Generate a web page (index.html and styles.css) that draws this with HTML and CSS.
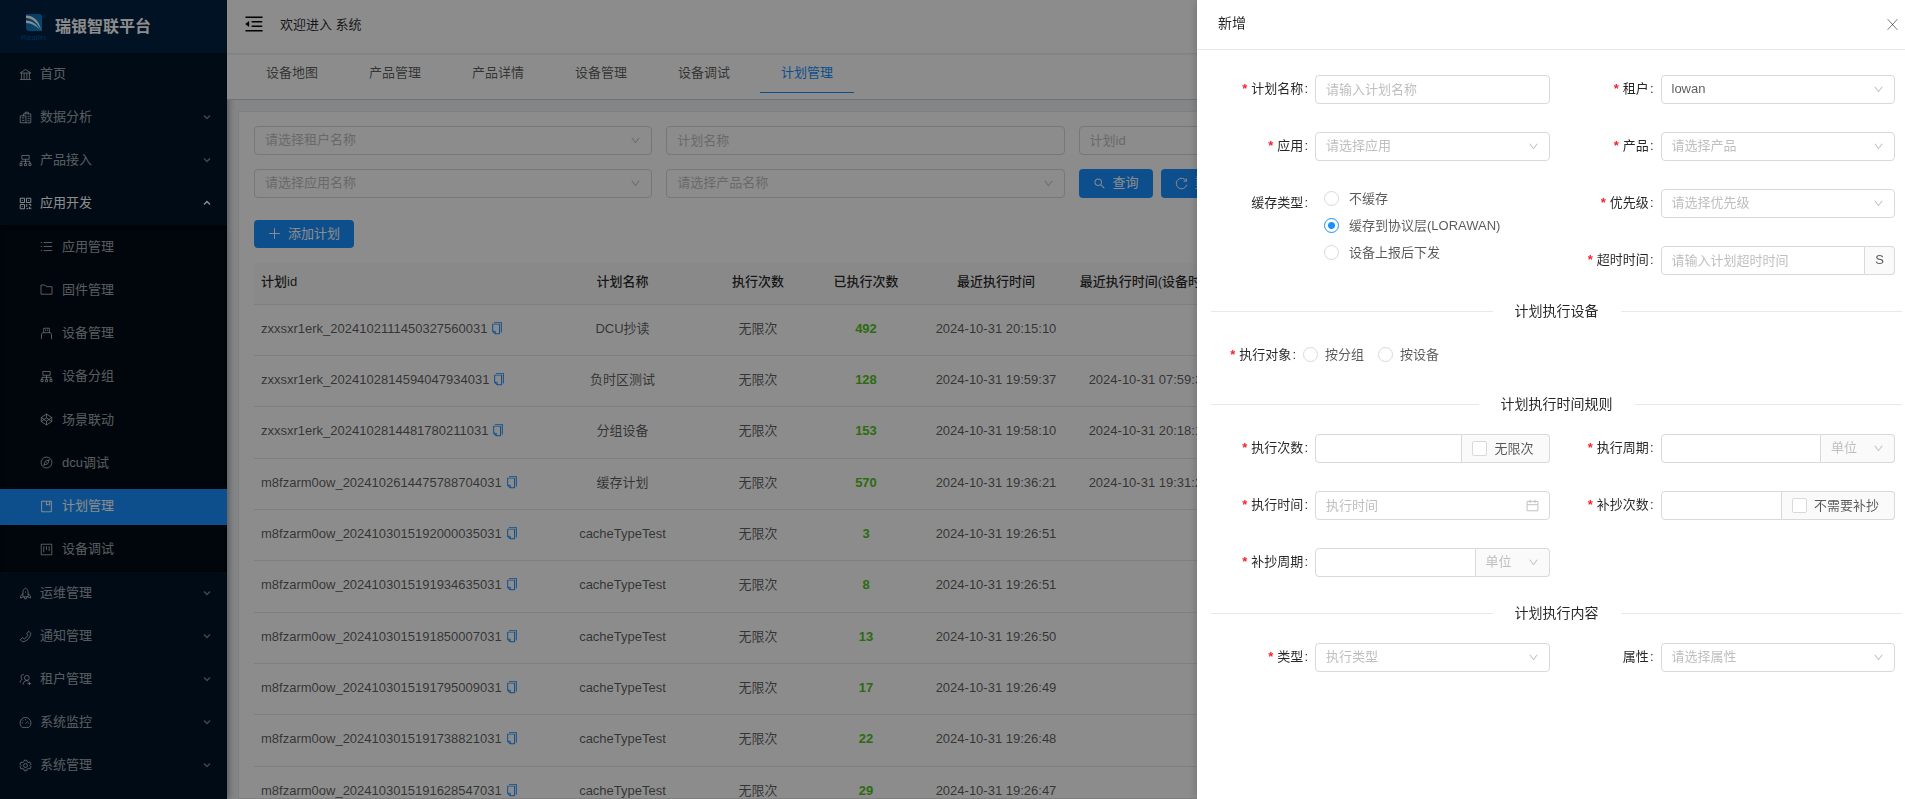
FILE: index.html
```html
<!DOCTYPE html>
<html lang="zh-CN">
<head>
<meta charset="utf-8">
<title>瑞银智联平台</title>
<link rel="stylesheet" href="styles.css">
</head>
<body>
<svg class="sprite" aria-hidden="true">
  <symbol id="i-bank" viewBox="0 0 16 16"><path d="M1.5 6.2 8 1.8l6.500 4.400zM3.200 6.500v7M6.300 6.500v7M9.700 6.500v7M12.800 6.500v7M1 14.200h14"/></symbol>
  <symbol id="i-data" viewBox="0 0 16 16"><path d="M5.500 6V3.500h2V1.500h4v2h3v11h-13V6h7v8.500M3.500 8.500h3M3.500 11.500h3M7.500 3.500h4M10.500 6.500H13M10.500 9.300H13M10.500 12H13"/></symbol>
  <symbol id="i-cluster" viewBox="0 0 16 16"><path d="M3.500 1.800h9v4.700h-9zM8 6.500v4.500M2.500 11.500V9h11v2.500M1.200 11.700h2.600v2.600H1.200zM6.700 11.700h2.600v2.600H6.700zM12.200 11.700h2.600v2.600h-2.600z"/></symbol>
  <symbol id="i-qr" viewBox="0 0 16 16"><path d="M1.500 1.500h5.300v5.300H1.500zM9.200 1.500h5.300v5.300H9.200zM1.500 9.200h5.300v5.300H1.500zM4 3.600v1M11.800 3.600v1M4 11.300v1M9.500 8.700v3.500M12 9.200h2.500v2M9.200 14.300h2.300M12 12.500h1v2.300M14.500 13v2"/></symbol>
  <symbol id="i-list" viewBox="0 0 16 16"><path d="M4.500 3h10.500M4.500 8h10.500M4.500 13h10.500M1 3h1.600M1 8h1.600M1 13h1.600"/></symbol>
  <symbol id="i-folder" viewBox="0 0 16 16"><path d="M1.200 2.500h5l1.800 2h6.800v9.300H1.200z"/></symbol>
  <symbol id="i-usb" viewBox="0 0 16 16"><path d="M4.500 7V1.500h7V7M1.800 15V9.500c0-1.500 1-2.500 2.500-2.500h7.400c1.500 0 2.500 1 2.500 2.500V15M6.800 3.200v1.600M9.200 3.200v1.600"/></symbol>
  <symbol id="i-hex" viewBox="0 0 16 16"><path d="M8 1.300 14.500 5.500v5L8 14.700 1.500 10.500v-5zM8 1.300V6M8 10v4.700M1.500 5.500 8 10l6.500-4.500M1.500 10.500 8 6l6.500 4.500"/></symbol>
  <symbol id="i-compass" viewBox="0 0 16 16"><circle cx="8" cy="8" r="6.700"/><path d="M11.300 4.700 9.500 9.500l-4.800 1.800 1.800-4.800zM8 8l.5.5"/></symbol>
  <symbol id="i-book" viewBox="0 0 16 16"><path d="M2 1.500h12v13H2zM8 1.500v5l2-1.500 2 1.500v-5"/></symbol>
  <symbol id="i-project" viewBox="0 0 16 16"><path d="M1.500 1.500h13v13h-13zM4.700 4v7.500M8 4v4.500M11.300 4v6"/></symbol>
  <symbol id="i-rocket" viewBox="0 0 16 16"><path d="M4.800 12V6C5 4 6.300 2.300 8 1.200 9.700 2.300 11 4 11.200 6v6zM4.800 8 1.800 11.500v2l3-1M11.200 8l3 3.500v2l-3-1M6.500 12.500l.5 2h2l.5-2M8 5.500v1.500"/></symbol>
  <symbol id="i-phone" viewBox="0 0 16 16"><path d="M12 1.500 14.500 4c-.4 5.700-4.800 10.100-10.500 10.500L1.500 12l3-2.500 2 1.500C8.500 10 10 8.500 11 6.500L9.500 4.500z"/></symbol>
  <symbol id="i-users" viewBox="0 0 16 16"><circle cx="9.700" cy="6" r="3"/><path d="M5 14.500c0-3 1.500-5 4.700-5 1 0 1.600.2 2.300.6M6 2C3.500 1.500 2.500 3 2.500 4.500S3 7 4 7.700C2.200 8.500 1.500 10 1.300 12M10.500 13h4.500M12.700 11v4"/></symbol>
  <symbol id="i-dash" viewBox="0 0 16 16"><path d="M4 14h8c1.600-1.300 2.700-3.200 2.700-5.500A6.700 6.700 0 0 0 1.300 8.500C1.300 10.800 2.400 12.700 4 14zM8 9.500l3-3M3.500 8.500H5M11.500 9h1M8 4v1.300M4.700 5.200l.8.800"/></symbol>
  <symbol id="i-gear" viewBox="0 0 16 16"><circle cx="8" cy="8" r="2.400"/><path d="M6.500 1.500h3l.5 2 1.500.9 2-.6 1.400 2.600-1.400 1.400v.4l1.400 1.400-1.400 2.600-2-.6-1.500.9-.5 2h-3l-.5-2-1.500-.9-2 .6-1.400-2.600 1.400-1.400v-.4L1.100 6.400l1.400-2.600 2 .6L6 3.500z"/></symbol>
  <symbol id="i-caret" viewBox="0 0 16 16"><path d="M2 5 8 11 14 5"/></symbol>
  <symbol id="i-plus" viewBox="0 0 16 16"><path d="M8 1.500v13M1.500 8h13"/></symbol>
  <symbol id="i-close" viewBox="0 0 16 16"><path d="M2 1.500 14 14.500M14 1.500 2 14.500"/></symbol>
  <symbol id="i-reload" viewBox="0 0 16 16"><path d="M13.800 5A6.500 6.500 0 1 0 14.400 9.500M14 1.800V5.200h-3.400"/></symbol>
  <symbol id="i-calendar" viewBox="0 0 16 16"><path d="M1.300 3h13.400v11.500H1.300zM1.300 7h13.400M5 1v4M11 1v4"/></symbol>
  <symbol id="i-down" viewBox="0 0 1024 1024"><path d="M884 256h-75c-5.100 0-9.900 2.500-12.900 6.600L512 654.200 227.900 262.600c-3-4.100-7.800-6.600-12.900-6.600h-75c-6.500 0-10.300 7.400-6.500 12.700l352.600 486.100c12.800 17.600 39 17.600 51.700 0l352.600-486.100c3.900-5.300.1-12.700-6.400-12.700z"/></symbol>
  <symbol id="i-search" viewBox="0 0 1024 1024"><path d="M909.600 854.500L649.900 594.800C690.200 542.700 712 479 712 412c0-80.200-31.300-155.400-87.900-212.100-56.600-56.700-132-87.900-212.100-87.900s-155.500 31.300-212.100 87.900C143.200 256.500 112 331.800 112 412c0 80.100 31.300 155.500 87.900 212.100C256.500 680.800 331.800 712 412 712c67 0 130.600-21.800 182.700-62l259.700 259.600a8.200 8.200 0 0 0 11.600 0l43.600-43.500a8.200 8.200 0 0 0 0-11.600zM570.400 570.400C528 612.700 471.800 636 412 636s-116-23.300-158.400-65.600C211.300 528 188 471.800 188 412s23.300-116.100 65.600-158.400C296 211.300 352.200 188 412 188s116.100 23.200 158.400 65.600S636 352.200 636 412s-23.300 116.100-65.600 158.400z"/></symbol>
  <symbol id="i-fold" viewBox="0 0 1024 1024"><path d="M408 442h480c4.400 0 8-3.600 8-8v-56c0-4.400-3.600-8-8-8H408c-4.400 0-8 3.600-8 8v56c0 4.400 3.600 8 8 8zm-8 204c0 4.400 3.600 8 8 8h480c4.400 0 8-3.600 8-8v-56c0-4.400-3.600-8-8-8H408c-4.400 0-8 3.600-8 8v56zm504-486H120c-4.400 0-8 3.600-8 8v56c0 4.400 3.600 8 8 8h784c4.400 0 8-3.600 8-8v-56c0-4.400-3.600-8-8-8zm0 632H120c-4.400 0-8 3.600-8 8v56c0 4.400 3.600 8 8 8h784c4.400 0 8-3.600 8-8v-56c0-4.400-3.600-8-8-8zM115.400 518.900L271.700 642c5.800 4.600 14.400.5 14.400-6.900V388.900c0-7.400-8.500-11.500-14.400-6.900L115.400 505.100a8.740 8.740 0 0 0 0 13.800z"/></symbol>
  <symbol id="i-copy" viewBox="0 0 1024 1024"><path d="M832 64H296c-4.400 0-8 3.600-8 8v56c0 4.400 3.600 8 8 8h496v688c0 4.400 3.600 8 8 8h56c4.400 0 8-3.600 8-8V96c0-17.700-14.300-32-32-32zM704 192H192c-17.700 0-32 14.300-32 32v530.700c0 8.500 3.400 16.600 9.400 22.600l173.300 173.300c2.200 2.200 4.700 4 7.400 5.500v1.900h4.200c3.500 1.300 7.200 2 11 2H704c17.700 0 32-14.300 32-32V224c0-17.700-14.300-32-32-32zM350 856.200L263.900 770H350v86.200zM664 888H414V746c0-22.100-17.900-40-40-40H232V264h432v624z"/></symbol>
</svg>

<div class="app">
  <aside class="sidebar">
    <a class="brand" href="#">
      <svg class="brand-logo" viewBox="0 0 26 30" aria-hidden="true">
        <defs><linearGradient id="logo-fill" x1="0" y1="0" x2="1" y2="1"><stop offset="0" stop-color="#0868ae"/><stop offset="1" stop-color="#0a8ad2"/></linearGradient></defs>
        <path d="M5 2h13q3 0 3 3v14H8q-3 0-3-3z" fill="url(#logo-fill)"/>
        <path d="M5 3.500C12 3.500 18 8 20 18 16 10.500 12 6.500 5 6z" fill="#fff"/>
        <path d="M5 8.500c6 .3 10.500 3.500 13.500 9C14.500 13.500 10.500 11.300 5 11z" fill="#fff"/>
        <text class="brand-mark" x="0" y="28">Reallin</text>
        <circle cx="23.500" cy="4" r="1.300" fill="none" stroke="#08508c" stroke-width=".6"/>
      </svg>
      <span class="brand-name">瑞银智联平台</span>
    </a>
    <nav>
      <ul class="menu">
        <li><a class="menu-item" href="#"><svg class="icon"><use href="#i-bank"/></svg>首页</a></li>
        <li><a class="menu-item" href="#"><svg class="icon"><use href="#i-data"/></svg>数据分析<svg class="icon caret"><use href="#i-caret"/></svg></a></li>
        <li><a class="menu-item" href="#"><svg class="icon"><use href="#i-cluster"/></svg>产品接入<svg class="icon caret"><use href="#i-caret"/></svg></a></li>
        <li>
          <a class="menu-item is-open" href="#"><svg class="icon"><use href="#i-qr"/></svg>应用开发<svg class="icon caret"><use href="#i-caret"/></svg></a>
          <ul class="submenu">
            <li><a class="sub-item" href="#"><svg class="icon"><use href="#i-list"/></svg>应用管理</a></li>
            <li><a class="sub-item" href="#"><svg class="icon"><use href="#i-folder"/></svg>固件管理</a></li>
            <li><a class="sub-item" href="#"><svg class="icon"><use href="#i-usb"/></svg>设备管理</a></li>
            <li><a class="sub-item" href="#"><svg class="icon"><use href="#i-cluster"/></svg>设备分组</a></li>
            <li><a class="sub-item" href="#"><svg class="icon"><use href="#i-hex"/></svg>场景联动</a></li>
            <li><a class="sub-item" href="#"><svg class="icon"><use href="#i-compass"/></svg>dcu调试</a></li>
            <li><a class="sub-item is-active" href="#"><svg class="icon"><use href="#i-book"/></svg>计划管理</a></li>
            <li><a class="sub-item" href="#"><svg class="icon"><use href="#i-project"/></svg>设备调试</a></li>
          </ul>
        </li>
        <li><a class="menu-item" href="#"><svg class="icon"><use href="#i-rocket"/></svg>运维管理<svg class="icon caret"><use href="#i-caret"/></svg></a></li>
        <li><a class="menu-item" href="#"><svg class="icon"><use href="#i-phone"/></svg>通知管理<svg class="icon caret"><use href="#i-caret"/></svg></a></li>
        <li><a class="menu-item" href="#"><svg class="icon"><use href="#i-users"/></svg>租户管理<svg class="icon caret"><use href="#i-caret"/></svg></a></li>
        <li><a class="menu-item" href="#"><svg class="icon"><use href="#i-dash"/></svg>系统监控<svg class="icon caret"><use href="#i-caret"/></svg></a></li>
        <li><a class="menu-item" href="#"><svg class="icon"><use href="#i-gear"/></svg>系统管理<svg class="icon caret"><use href="#i-caret"/></svg></a></li>
      </ul>
    </nav>
  </aside>

  <div class="workspace">
    <header class="topbar">
      <button class="fold" type="button" aria-label="收起菜单"><svg class="icon-solid"><use href="#i-fold"/></svg></button>
      <span>欢迎进入 系统</span>
    </header>
    <nav class="tabs">
      <a class="tab" href="#">设备地图</a>
      <a class="tab" href="#">产品管理</a>
      <a class="tab" href="#">产品详情</a>
      <a class="tab" href="#">设备管理</a>
      <a class="tab" href="#">设备调试</a>
      <a class="tab is-active" href="#">计划管理</a>
    </nav>
    <main class="content">
      <section class="card">
        <form class="filters">
          <div class="select"><select aria-label="租户名称" required><option value="" selected>请选择租户名称</option></select><svg class="icon-solid arrow"><use href="#i-down"/></svg></div>
          <input class="input" type="text" placeholder="计划名称" aria-label="计划名称">
          <input class="input" type="text" placeholder="计划id" aria-label="计划id">
          <span></span>
          <div class="select"><select aria-label="应用名称" required><option value="" selected>请选择应用名称</option></select><svg class="icon-solid arrow"><use href="#i-down"/></svg></div>
          <div class="select"><select aria-label="产品名称" required><option value="" selected>请选择产品名称</option></select><svg class="icon-solid arrow"><use href="#i-down"/></svg></div>
          <div class="actions">
            <button class="btn" type="button"><svg class="icon-solid"><use href="#i-search"/></svg>查询</button>
            <button class="btn" type="button"><svg class="icon"><use href="#i-reload"/></svg>重置</button>
          </div>
        </form>
        <button class="btn btn-add" type="button"><svg class="icon"><use href="#i-plus"/></svg>添加计划</button>
        <table class="plans">
          <colgroup><col class="c-id"><col class="c-name"><col class="c-times"><col class="c-done"><col class="c-last"><col class="c-device"><col></colgroup>
          <thead>
            <tr><th>计划id</th><th>计划名称</th><th>执行次数</th><th>已执行次数</th><th>最近执行时间</th><th>最近执行时间(设备时区)</th><th></th></tr>
          </thead>
          <tbody>
            <tr><td>zxxsxr1erk_2024102111450327560031<svg class="icon-solid copy"><use href="#i-copy"/></svg></td><td>DCU抄读</td><td>无限次</td><td>492</td><td>2024-10-31 20:15:10</td><td></td><td></td></tr>
            <tr><td>zxxsxr1erk_2024102814594047934031<svg class="icon-solid copy"><use href="#i-copy"/></svg></td><td>负时区测试</td><td>无限次</td><td>128</td><td>2024-10-31 19:59:37</td><td>2024-10-31 07:59:37</td><td></td></tr>
            <tr><td>zxxsxr1erk_2024102814481780211031<svg class="icon-solid copy"><use href="#i-copy"/></svg></td><td>分组设备</td><td>无限次</td><td>153</td><td>2024-10-31 19:58:10</td><td>2024-10-31 20:18:10</td><td></td></tr>
            <tr><td>m8fzarm0ow_2024102614475788704031<svg class="icon-solid copy"><use href="#i-copy"/></svg></td><td>缓存计划</td><td>无限次</td><td>570</td><td>2024-10-31 19:36:21</td><td>2024-10-31 19:31:21</td><td></td></tr>
            <tr><td>m8fzarm0ow_2024103015192000035031<svg class="icon-solid copy"><use href="#i-copy"/></svg></td><td>cacheTypeTest</td><td>无限次</td><td>3</td><td>2024-10-31 19:26:51</td><td></td><td></td></tr>
            <tr><td>m8fzarm0ow_2024103015191934635031<svg class="icon-solid copy"><use href="#i-copy"/></svg></td><td>cacheTypeTest</td><td>无限次</td><td>8</td><td>2024-10-31 19:26:51</td><td></td><td></td></tr>
            <tr><td>m8fzarm0ow_2024103015191850007031<svg class="icon-solid copy"><use href="#i-copy"/></svg></td><td>cacheTypeTest</td><td>无限次</td><td>13</td><td>2024-10-31 19:26:50</td><td></td><td></td></tr>
            <tr><td>m8fzarm0ow_2024103015191795009031<svg class="icon-solid copy"><use href="#i-copy"/></svg></td><td>cacheTypeTest</td><td>无限次</td><td>17</td><td>2024-10-31 19:26:49</td><td></td><td></td></tr>
            <tr><td>m8fzarm0ow_2024103015191738821031<svg class="icon-solid copy"><use href="#i-copy"/></svg></td><td>cacheTypeTest</td><td>无限次</td><td>22</td><td>2024-10-31 19:26:48</td><td></td><td></td></tr>
            <tr><td>m8fzarm0ow_2024103015191628547031<svg class="icon-solid copy"><use href="#i-copy"/></svg></td><td>cacheTypeTest</td><td>无限次</td><td>29</td><td>2024-10-31 19:26:47</td><td></td><td></td></tr>
          </tbody>
        </table>
      </section>
    </main>
  </div>
</div>

<div class="mask"></div>

<section class="drawer" role="dialog" aria-labelledby="drawer-title">
  <header class="drawer-head">
    <h2 class="drawer-title" id="drawer-title">新增</h2>
    <button class="close" type="button" aria-label="关闭"><svg class="icon"><use href="#i-close"/></svg></button>
  </header>
  <form class="drawer-body">
    <div class="fields">
      <div class="field"><label class="label required" for="name">计划名称</label><input class="input" id="name" type="text" placeholder="请输入计划名称"></div>
      <div class="field"><label class="label required" for="tenant">租户</label><div class="select"><select id="tenant"><option value="lowan">lowan</option></select><svg class="icon-solid arrow"><use href="#i-down"/></svg></div></div>
      <div class="field"><label class="label required" for="app">应用</label><div class="select"><select id="app" required><option value="" selected>请选择应用</option></select><svg class="icon-solid arrow"><use href="#i-down"/></svg></div></div>
      <div class="field"><label class="label required" for="product">产品</label><div class="select"><select id="product" required><option value="" selected>请选择产品</option></select><svg class="icon-solid arrow"><use href="#i-down"/></svg></div></div>
      <div class="field field-tall" role="radiogroup" aria-labelledby="cache-label">
        <span class="label" id="cache-label">缓存类型</span>
        <div class="radio-list">
          <label class="check"><input type="radio" name="cache">不缓存</label>
          <label class="check"><input type="radio" name="cache" checked>缓存到协议层(LORAWAN)</label>
          <label class="check"><input type="radio" name="cache">设备上报后下发</label>
        </div>
      </div>
      <div class="field"><label class="label required" for="priority">优先级</label><div class="select"><select id="priority" required><option value="" selected>请选择优先级</option></select><svg class="icon-solid arrow"><use href="#i-down"/></svg></div></div>
      <div class="field"><label class="label required" for="timeout">超时时间</label><div class="group"><input class="input" id="timeout" type="text" placeholder="请输入计划超时时间"><span class="addon">S</span></div></div>
    </div>

    <h3 class="divider">计划执行设备</h3>
    <div class="target" role="radiogroup" aria-labelledby="target-label">
      <span class="label required" id="target-label">执行对象</span>
      <label class="check"><input type="radio" name="target">按分组</label>
      <label class="check"><input type="radio" name="target">按设备</label>
    </div>

    <h3 class="divider">计划执行时间规则</h3>
    <div class="fields">
      <div class="field"><label class="label required" for="times">执行次数</label><div class="group"><input class="input" id="times" type="text"><label class="addon check"><input type="checkbox">无限次</label></div></div>
      <div class="field"><label class="label required" for="period">执行周期</label><div class="group"><input class="input" id="period" type="text"><div class="select unit"><select aria-label="执行周期单位" required><option value="" selected>单位</option></select><svg class="icon-solid arrow"><use href="#i-down"/></svg></div></div></div>
      <div class="field"><label class="label required" for="runtime">执行时间</label><div class="select"><input class="input" id="runtime" type="text" placeholder="执行时间"><svg class="icon arrow"><use href="#i-calendar"/></svg></div></div>
      <div class="field"><label class="label required" for="retry">补抄次数</label><div class="group"><input class="input" id="retry" type="text"><label class="addon check"><input type="checkbox">不需要补抄</label></div></div>
      <div class="field"><label class="label required" for="retry-period">补抄周期</label><div class="group"><input class="input" id="retry-period" type="text"><div class="select unit"><select aria-label="补抄周期单位" required><option value="" selected>单位</option></select><svg class="icon-solid arrow"><use href="#i-down"/></svg></div></div></div>
    </div>

    <h3 class="divider">计划执行内容</h3>
    <div class="fields">
      <div class="field"><label class="label required" for="type">类型</label><div class="select"><select id="type" required><option value="" selected>执行类型</option></select><svg class="icon-solid arrow"><use href="#i-down"/></svg></div></div>
      <div class="field"><label class="label" for="attr">属性</label><div class="select"><select id="attr" required><option value="" selected>请选择属性</option></select><svg class="icon-solid arrow"><use href="#i-down"/></svg></div></div>
    </div>
  </form>
</section>
</body>
</html>
```
FILE: styles.css
```css
*, *::before, *::after { box-sizing: border-box; }

body {
  margin: 0;
  height: 100vh;
  overflow: hidden;
  font: 13px/20px "Liberation Sans", "Noto Sans CJK SC", sans-serif;
  color: rgba(0, 0, 0, .65);
}
ul { margin: 0; padding: 0; list-style: none; }
a { color: inherit; text-decoration: none; }
button, input, select { font: inherit; color: inherit; margin: 0; }
.sprite { display: none; }

.icon, .icon-solid { flex: none; width: 13px; height: 13px; }
.icon { fill: none; stroke: currentColor; stroke-width: 1.200; }
.icon-solid { fill: currentColor; }

/* Shell */
.app { display: flex; height: 100%; }

.sidebar {
  position: relative;
  flex: none;
  width: 227px;
  background: #001529;
  color: rgba(255, 255, 255, .65);
  box-shadow: 2px 0 6px rgba(0, 21, 41, .35);
}
.brand {
  display: flex;
  align-items: center;
  gap: 8px;
  height: 53px;
  padding-left: 21px;
  background: #002140;
}
.brand-logo { width: 26px; height: 30px; }
.brand-mark { font: 8px "Liberation Sans", sans-serif; fill: #0654a4; }
.brand-name { font-size: 16px; font-weight: 600; color: #fff; }

.menu-item {
  display: flex;
  align-items: center;
  gap: 8px;
  height: 43px;
  padding: 0 16px 1px 19px;
}
.menu-item.is-open { color: #fff; }
.caret { width: 8px; height: 8px; margin-left: auto; stroke-width: 3; opacity: .7; }
.is-open .caret { transform: rotate(180deg); opacity: 1; }
.submenu {
  display: grid;
  grid-auto-rows: 36px;
  align-content: space-between;
  height: 347px;
  padding: 4px 0;
  background: #000c17;
  box-shadow: inset 0 2px 8px rgba(0, 0, 0, .45);
}
.sub-item {
  display: flex;
  align-items: center;
  gap: 9px;
  height: 36px;
  padding: 0 0 1px 40px;
}
.sub-item.is-active { background: #1890ff; color: #fff; }

.workspace { display: flex; flex-direction: column; flex: 1; min-width: 0; background: #f0f2f5; }
.topbar, .tabs { position: relative; flex: none; background: #fff; }
.topbar {
  display: flex;
  align-items: center;
  gap: 15px;
  height: 53px;
  padding: 0 0 3px 16px;
  color: rgba(0, 0, 0, .85);
  z-index: 1;
  box-shadow: 0 1px 2px rgba(0, 21, 41, .12);
}
.fold { display: flex; padding: 0 0 3px; border: 0; background: none; color: #000; }
.fold svg { width: 22px; height: 22px; }
.tabs { display: flex; gap: 9px; height: 47px; padding-left: 18px; border-bottom: 1px solid #d0d0d0; }
.tab { width: 94px; height: 40px; line-height: 40px; text-align: center; }
.tab.is-active { color: #1890ff; border-bottom: 1px solid #1890ff; }

.content { flex: 1; min-height: 0; padding: 11px 0 0 11px; }
.card { height: 100%; padding: 14px 15px 0; border: 1px solid #e8e8e8; background: #fff; overflow: hidden; }
.filters { display: grid; grid-template-columns: repeat(4, 1fr); gap: 14px; }
.actions { display: flex; gap: 8px; }

/* Controls */
.input, .select select {
  display: block;
  width: 100%;
  min-width: 0;
  height: 29px;
  padding: 0 10px 1px;
  border: 1px solid #d9d9d9;
  border-radius: 4px;
  background: #fff;
  outline: 0;
}
.select select { appearance: none; }
.select select:invalid, .input::placeholder { color: #bfbfbf; opacity: 1; }
.select { position: relative; }
.arrow { position: absolute; top: 9px; right: 11px; width: 11px; height: 11px; color: #bfbfbf; pointer-events: none; }
.icon.arrow { top: 8px; width: 13px; height: 13px; }

.btn {
  display: flex;
  align-items: center;
  gap: 7px;
  height: 29px;
  padding: 0 14px 1px;
  border: 0;
  border-radius: 4px;
  background: #1890ff;
  color: #fff;
}
.btn-add { margin: 22px 0 15px; height: 28px; }

/* Plan table */
.plans { width: 100%; height: 555px; table-layout: fixed; border-collapse: collapse; text-align: center; white-space: nowrap; }
.c-id { width: 281px; }
.c-name { width: 175px; }
.c-times { width: 96px; }
.c-done { width: 120px; }
.c-last { width: 140px; }
.c-device { width: 166px; }
.plans th, .plans td { padding: 0 7px 2px; border-bottom: 1px solid #e8e8e8; }
.plans th { height: 41px; background: #fafafa; font-weight: 500; color: rgba(0, 0, 0, .85); }
.plans th:first-child, .plans td:first-child { text-align: left; }
.plans td:nth-child(4) { color: #52c41a; font-weight: 600; }
.plans .copy { width: 14px; height: 14px; margin-left: 3px; vertical-align: -2px; color: #1890ff; }

/* Drawer */
.mask { position: fixed; inset: 0; z-index: 10; background: rgba(0, 0, 0, .45); }
.drawer {
  position: fixed;
  top: 0;
  right: 0;
  bottom: 0;
  z-index: 11;
  width: 708px;
  max-width: 100%;
  background: #fff;
  box-shadow: -2px 0 8px rgba(0, 0, 0, .15);
}
.drawer-head {
  display: flex;
  align-items: center;
  justify-content: space-between;
  height: 50px;
  padding: 0 6px 3px 21px;
  border-bottom: 1px solid #e8e8e8;
}
.drawer-title, .divider { margin: 0; font-size: 14px; font-weight: 400; color: rgba(0, 0, 0, .85); }
.close { display: flex; padding: 2px 0 0; border: 0; background: none; color: rgba(0, 0, 0, .55); }
.drawer-body { padding: 25px 3px 0 14px; }

.fields { display: grid; grid-template-columns: 1fr 1fr; gap: 28px 0; }
.field { display: grid; grid-template-columns: 104px 1fr; height: 29px; padding-right: 7px; }
.field-tall { grid-row: span 2; }
.label { padding-right: 7px; line-height: 27px; text-align: right; color: rgba(0, 0, 0, .85); }
.label::after { content: ":"; margin-left: 1px; }
.required::before { content: "*"; margin-right: 4px; color: #f5222d; font-weight: 700; }

.check { display: flex; align-items: center; gap: 7px; }
.check input { appearance: none; flex: none; width: 15px; height: 15px; border: 1px solid #d9d9d9; background: #fff; }
.check input[type="checkbox"] { border-radius: 2px; }
.check input[type="radio"] { border-radius: 50%; }
.check input[type="radio"]:checked { border-color: #1890ff; background: radial-gradient(circle, #1890ff 3px, #fff 4px); }
.radio-list { display: grid; grid-auto-rows: 27px; margin-top: -4px; padding-left: 9px; }
.radio-list .check { gap: 10px; }

.group { display: flex; }
.group .input { flex: 1; border-radius: 4px 0 0 4px; }
.addon { flex: none; padding: 0 10px; border: 1px solid #d9d9d9; border-left: 0; border-radius: 0 4px 4px 0; background: #fafafa; line-height: 26px; }
.addon.check { padding-right: 15px; }
.unit { flex: none; width: 74px; }
.unit select { border-left: 0; border-radius: 0 4px 4px 0; background: #fafafa; }

.drawer-body .divider { display: flex; align-items: center; gap: 22px; margin: 26px 0 20px; line-height: 20px; }
.divider::before, .divider::after { content: ""; flex: 1; height: 1px; background: #e8e8e8; }
.target { display: flex; gap: 14px; }
.target .label { width: 92px; margin-right: -14px; }
```
